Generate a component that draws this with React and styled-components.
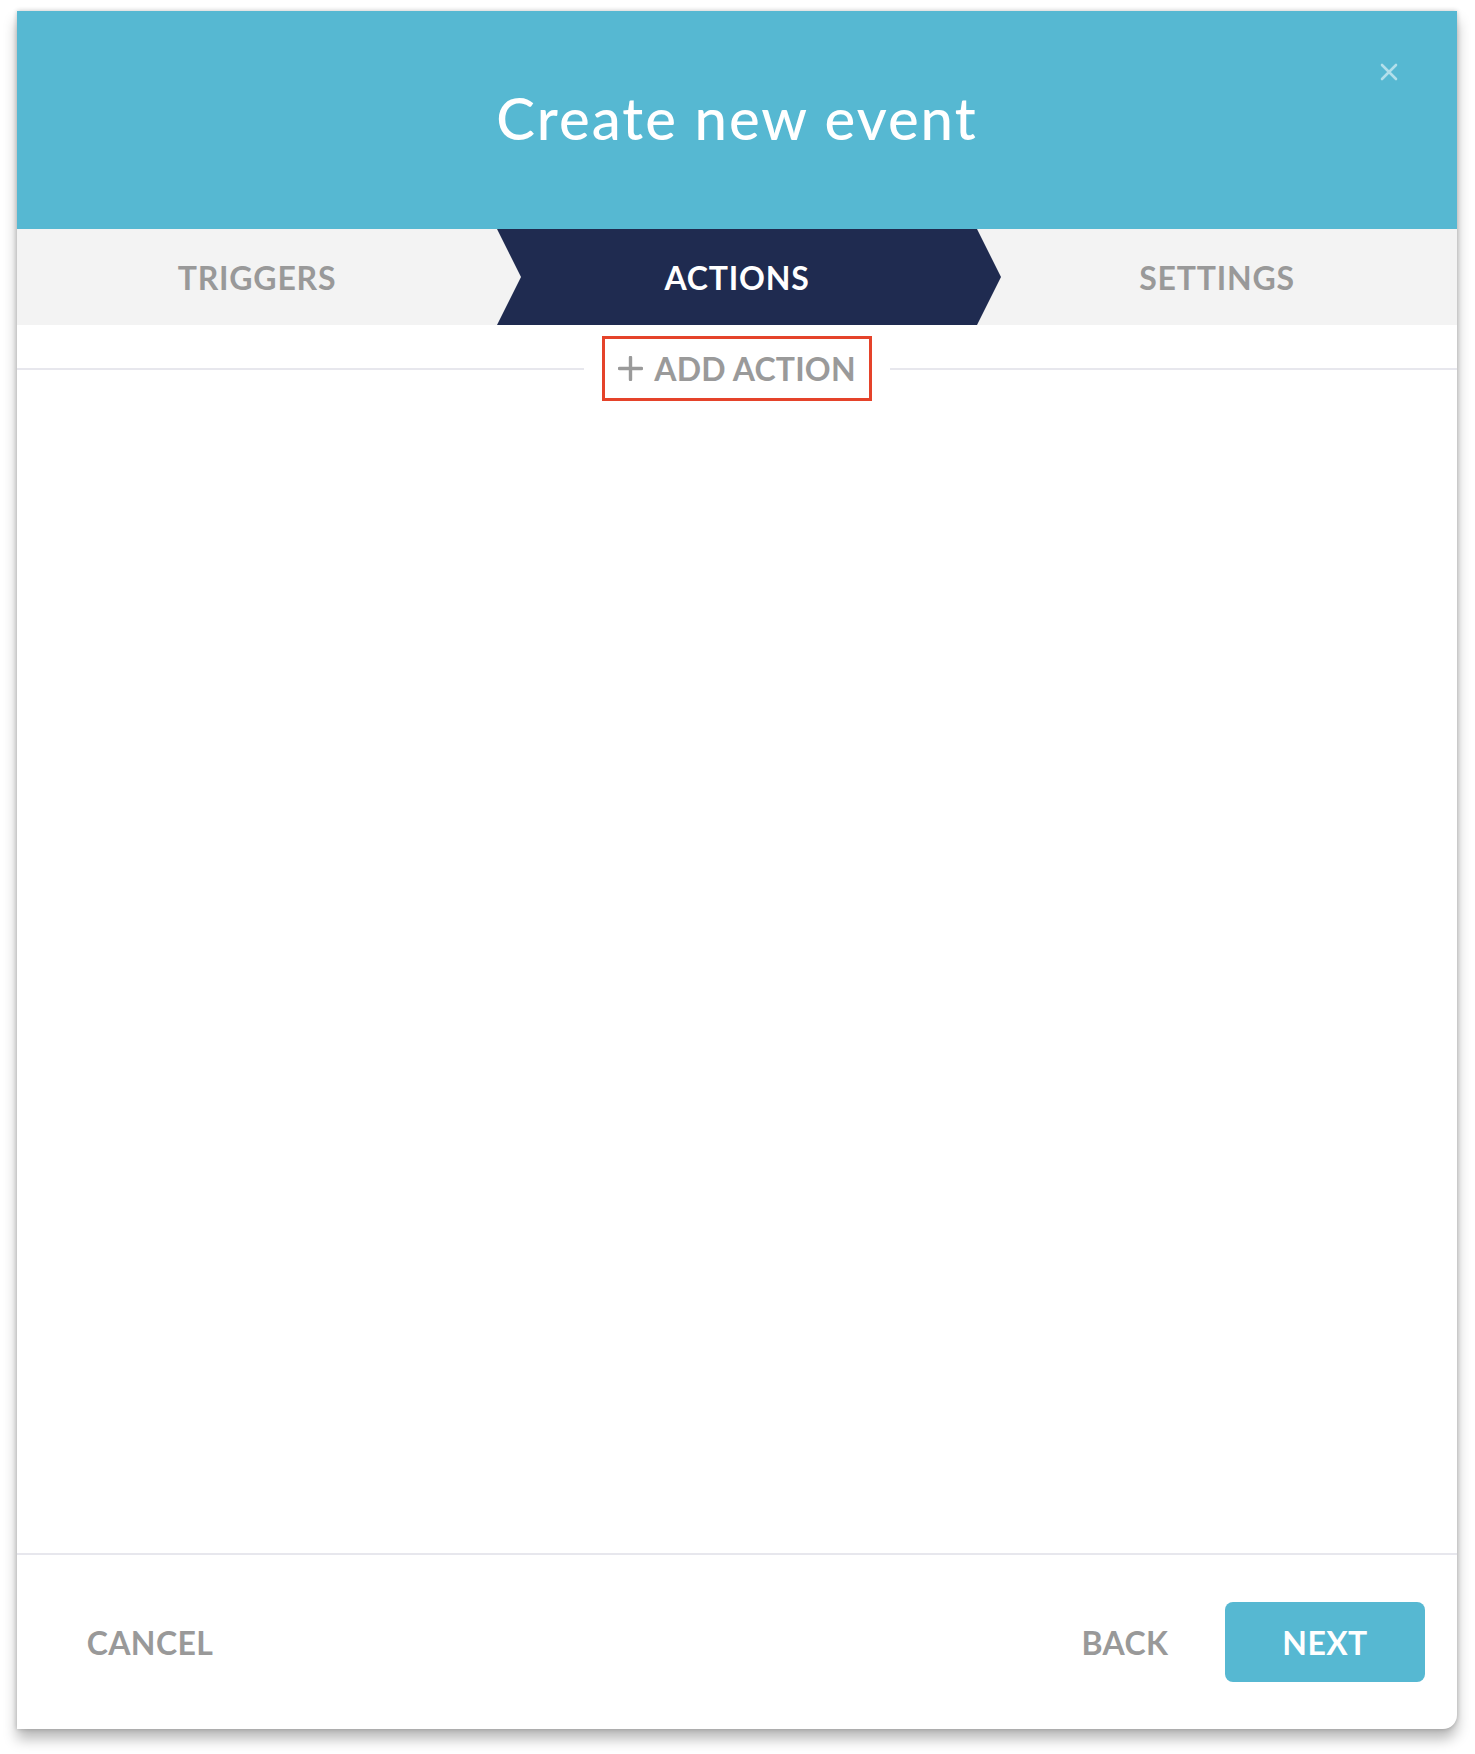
import React from "react";
import styled, { createGlobalStyle } from "styled-components";

const GlobalStyle = createGlobalStyle`
  html, body {
    margin: 0;
    padding: 0;
    background: #ffffff;
  }
  body {
    font-family: "Lato", "Open Sans", sans-serif;
  }
`;

const TABS = ["TRIGGERS", "ACTIONS", "SETTINGS"];

const App = () => {
  const activeTab = 1;

  return (
    <>
      <GlobalStyle />
      <StPage>
        <StModal>
          <StHeader>
            <StTitle>Create new event</StTitle>
            <StClose aria-label="close">
              <svg width="18" height="18" viewBox="0 0 18 18">
                <path
                  d="M2 2 L16 16 M16 2 L2 16"
                  stroke="currentColor"
                  strokeWidth="2.6"
                  strokeLinecap="round"
                />
              </svg>
            </StClose>
          </StHeader>

          <StTabWrap>
            {TABS.map((tab, i) => (
              <StTab key={tab} $active={i === activeTab}>
                <span>{tab}</span>
              </StTab>
            ))}
          </StTabWrap>

          <StBody>
            <StAddRow>
              <StLine />
              <StAddBtn>
                <svg width="25" height="25" viewBox="0 0 25 25">
                  <path
                    d="M12.5 1.5 V23.5 M1.5 12.5 H23.5"
                    stroke="currentColor"
                    strokeWidth="3.4"
                    strokeLinecap="round"
                  />
                </svg>
                ADD ACTION
              </StAddBtn>
              <StLine />
            </StAddRow>
          </StBody>

          <StFooter>
            <StTextBtn>CANCEL</StTextBtn>
            <StBtnGroup>
              <StTextBtn>BACK</StTextBtn>
              <StPrimaryBtn>NEXT</StPrimaryBtn>
            </StBtnGroup>
          </StFooter>
        </StModal>
      </StPage>
    </>
  );
};

export default App;

const StPage = styled.div`
  padding: 11px 18px 25px 17px;
`;

const StModal = styled.div`
  position: relative;
  width: 1440px;
  height: 1718px;
  display: flex;
  flex-flow: column;
  background: #ffffff;
  border-bottom-right-radius: 14px;
  box-shadow: 0 10px 14px rgba(0, 0, 0, 0.28), 0 0 5px rgba(0, 0, 0, 0.22);
  &::before {
    content: "";
    position: absolute;
    right: 0;
    bottom: 0;
    width: 16px;
    height: 16px;
    background: #151515;
    z-index: -1;
  }
`;

const StHeader = styled.div`
  position: relative;
  height: 218px;
  flex-shrink: 0;
  box-sizing: border-box;
  padding-bottom: 6px;
  display: flex;
  justify-content: center;
  align-items: center;
  background: #56b8d2;
`;

const StTitle = styled.h1`
  margin: 0;
  color: #ffffff;
  font-size: 58px;
  font-weight: 500;
  letter-spacing: 2px;
`;

const StClose = styled.button`
  position: absolute;
  top: 52px;
  right: 59px;
  padding: 0;
  border: 0;
  background: none;
  display: flex;
  color: rgba(255, 255, 255, 0.55);
  cursor: pointer;
`;

const StTabWrap = styled.div`
  height: 96px;
  flex-shrink: 0;
  display: grid;
  grid-template-columns: repeat(3, 1fr);
  background: #f3f3f3;
`;

const StTab = styled.div`
  position: relative;
  display: flex;
  justify-content: center;
  align-items: center;
  font-size: 32px;
  font-weight: 700;
  letter-spacing: 0.8px;
  color: ${({ $active }) => ($active ? "#ffffff" : "#999999")};
  z-index: ${({ $active }) => ($active ? 1 : 0)};
  &::before {
    content: "";
    display: ${({ $active }) => ($active ? "block" : "none")};
    position: absolute;
    top: 0;
    left: 0;
    width: calc(100% + 24px);
    height: 100%;
    background: #1f2b50;
    clip-path: polygon(
      0 0,
      calc(100% - 24px) 0,
      100% 50%,
      calc(100% - 24px) 100%,
      0 100%,
      24px 50%
    );
  }
  span {
    position: relative;
  }
`;

const StBody = styled.div`
  flex: 1;
  padding-top: 11px;
`;

const StAddRow = styled.div`
  display: flex;
  align-items: center;
  column-gap: 18px;
`;

const StLine = styled.div`
  flex: 1;
  height: 2px;
  background: #e7e7ed;
`;

const StAddBtn = styled.button`
  height: 65px;
  padding: 0 13px 0 13px;
  display: flex;
  align-items: center;
  column-gap: 11px;
  border: 3px solid #e5432a;
  background: #ffffff;
  color: #9a9a9a;
  font-family: "Lato", "Open Sans", sans-serif;
  font-size: 32px;
  font-weight: 700;
  letter-spacing: 0.2px;
  cursor: pointer;
`;

const StFooter = styled.div`
  height: 174px;
  flex-shrink: 0;
  display: flex;
  justify-content: space-between;
  align-items: center;
  padding: 0 32px 0 33px;
  border-top: 2px solid #e7e7ed;
`;

const StBtnGroup = styled.div`
  display: flex;
`;

const StTextBtn = styled.button`
  min-width: 200px;
  height: 80px;
  border: 0;
  border-radius: 8px;
  background: none;
  color: #999999;
  font-family: "Lato", "Open Sans", sans-serif;
  font-size: 32px;
  font-weight: 700;
  letter-spacing: 0.4px;
  cursor: pointer;
`;

const StPrimaryBtn = styled(StTextBtn)`
  background: #56b8d2;
  color: #ffffff;
`;
